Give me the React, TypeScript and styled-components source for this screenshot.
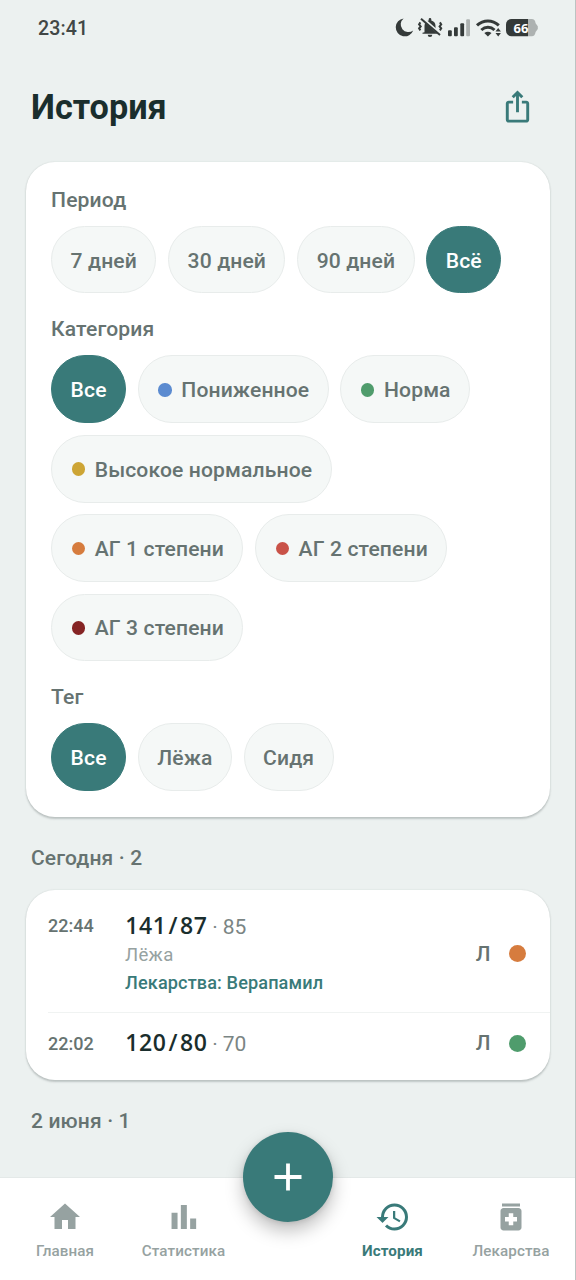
import React from "react";
import styled, { createGlobalStyle } from "styled-components";

const c = {
  bg: "#ecf1f0",
  teal: "#397a79",
  ink: "#1a2e2d",
  mid: "#667371",
  soft: "#96a2a1",
};

const Global = createGlobalStyle`
  * { box-sizing: border-box; }
  body { margin: 0; background: ${c.bg}; font-family: Roboto, sans-serif; }
`;

const Screen = styled.main`
  position: relative;
  display: flex;
  flex-direction: column;
  width: 576px;
  height: 1280px;
  overflow: hidden;
  background: ${c.bg};
  border-right: 1px solid #bcc3c2;
`;

const StatusBar = styled.div`
  display: flex;
  align-items: center;
  justify-content: space-between;
  height: 56px;
  padding: 0 37px 0 38px;
  color: #414746;
`;

const Clock = styled.span`
  font-size: 19.6px;
  font-weight: 500;
  letter-spacing: 0.1px;
  padding-top: 1px;
`;

const Header = styled.header`
  display: flex;
  align-items: center;
  justify-content: space-between;
  height: 105.5px;
  padding: 0 40px 4px 31px;
`;

const Title = styled.h1`
  margin: 0;
  color: ${c.ink};
  font-size: 34.2px;
  font-weight: 700;
  line-height: 42px;
`;

const Card = styled.section`
  margin: 0 25px 0 25.5px;
  background: #fff;
  border-radius: 29px;
  box-shadow: 0 1.5px 2px rgba(60, 75, 73, 0.26), 0 0 2px rgba(60, 75, 73, 0.1);
`;

const Filters = styled(Card)`
  display: flex;
  flex-direction: column;
  gap: 22.9px;
  height: 655.5px;
  padding: 25.2px 25.5px 0;
`;

const FilterLabel = styled.h2`
  margin: 0 0 13px;
  color: ${c.mid};
  font-size: 21.1px;
  font-weight: 500;
  letter-spacing: 0.15px;
  line-height: 26px;
`;

const Chips = styled.div`
  display: flex;
  flex-wrap: wrap;
  gap: 11.6px;
`;

const Chip = styled.button<{ $active?: boolean }>`
  display: flex;
  align-items: center;
  height: 67.8px;
  margin: 0;
  padding: 1px 18.4px 0 18.6px;
  border: 1.4px solid ${(p) => (p.$active ? c.teal : "#e8eceb")};
  border-radius: 34px;
  background: ${(p) => (p.$active ? c.teal : "#f5f8f7")};
  color: ${(p) => (p.$active ? "#fff" : c.mid)};
  font: 500 21.1px Roboto, sans-serif;
  letter-spacing: 0.13px;
  white-space: nowrap;
`;

const Dot = styled.i<{ $color: string; $size?: number }>`
  flex: none;
  width: ${(p) => p.$size ?? 13.5}px;
  height: ${(p) => p.$size ?? 13.5}px;
  border-radius: 50%;
  background: ${(p) => p.$color};
`;

const ChipDot = styled(Dot)`
  margin: 0 9.6px 0 1px;
`;

const DayLabel = styled.h2`
  margin: 0;
  padding: 28px 31px 18px;
  color: ${c.mid};
  font-size: 21px;
  font-weight: 500;
  letter-spacing: 0.15px;
  line-height: 27px;
`;

const Records = styled(Card)`
  height: 189.5px;
  padding-left: 22.5px;
`;

const Record = styled.article<{ $divided?: boolean }>`
  display: flex;
  align-items: center;
  height: ${(p) => (p.$divided ? 122.5 : 67)}px;
  padding-right: 24.5px;
  border-bottom: ${(p) => (p.$divided ? "1px solid #f0f3f2" : "0")};
  padding-top: ${(p) => (p.$divided ? 6 : 0)}px;
  margin-top: ${(p) => (p.$divided ? 0 : -3)}px;
`;

const Time = styled.time<{ $top: number }>`
  align-self: flex-start;
  width: 77px;
  padding-top: ${(p) => p.$top}px;
  color: ${c.mid};
  font-size: 18px;
  font-weight: 500;
  line-height: 24px;
`;

const Details = styled.div`
  flex: 1;
  align-self: flex-start;
`;

const Reading = styled.div<{ $top: number }>`
  display: flex;
  align-items: baseline;
  height: 28px;
  margin-top: ${(p) => p.$top}px;
  line-height: 28px;
`;

const Pressure = styled.strong`
  display: flex;
  color: ${c.ink};
  font: 600 23px/28px "Open Sans", sans-serif;
`;

const Digit = styled.span`
  width: 13.7px;
  text-align: center;
`;

const Pulse = styled.span`
  margin-left: 5px;
  color: #7a8584;
  font-size: 21px;
`;

const Tag = styled.div`
  color: ${c.soft};
  font-size: 18.6px;
  letter-spacing: 0.3px;
  line-height: 27px;
  margin-top: 2.5px;
`;

const Medicine = styled.div`
  color: ${c.teal};
  font-size: 18.1px;
  font-weight: 500;
  letter-spacing: 0.13px;
  line-height: 28px;
`;

const Arm = styled.span`
  margin-right: 18px;
  color: ${c.mid};
  font-size: 20.8px;
  font-weight: 500;
`;

const TabBar = styled.nav`
  display: flex;
  height: 103px;
  margin-top: auto;
  background: #fff;
  border-top: 1px solid #e4e9e8;
`;

const Tab = styled.a<{ $active?: boolean; $width: number }>`
  display: flex;
  flex: none;
  flex-direction: column;
  align-items: center;
  width: ${(p) => p.$width}px;
  padding-top: 21px;
  color: ${(p) => (p.$active ? c.teal : c.soft)};
  font-size: 15.2px;
  font-weight: ${(p) => (p.$active ? 700 : 500)};
  letter-spacing: 0.1px;
  line-height: 20px;
  svg { width: 36px; height: 36px; margin-bottom: 6px; }
`;

const FabSlot = styled.div`
  flex: none;
  width: 102px;
`;

const Fab = styled.button`
  position: absolute;
  left: 243px;
  bottom: 58px;
  display: grid;
  place-items: center;
  width: 90px;
  height: 90px;
  padding: 0;
  border: 0;
  border-radius: 50%;
  background: ${c.teal};
  box-shadow: 0 9px 18px rgba(0, 0, 0, 0.25), 0 1px 5px rgba(0, 0, 0, 0.1);
`;

const Glyph = ({ d, size = 36 }: { d: string; size?: number }) => (
  <svg width={size} height={size} viewBox="0 0 24 24" fill="currentColor" aria-hidden>
    <path d={d} />
  </svg>
);

const ShareButton = styled.button`
  display: flex;
  padding: 0;
  border: 0;
  background: none;
  color: ${c.teal};
`;

const StatusIcons = () => (
  <svg width="143" height="22" viewBox="0 0 143 22" fill="#343a39" aria-hidden>
    <path d="M8.6 1.4A9 9 0 1 0 18.2 13.4A7.2 7.2 0 0 1 8.6 1.4z" />
    <path d="M29.5 15.3V8.7c0-3 2-4.8 4.2-5.3V2.2a1.3 1.3 0 0 1 2.6 0v1.2c2.4.5 4.2 2.4 4.2 5.3v4.9l2 2.1v1.1H27.5v-1zM32.7 17.8h4.6a2.3 2.3 0 0 1-4.6 0z" />
    <path d="M25.4 5.4l-1.3 2 1.6 2-1.6 2 1.3 2M44.9 5.4l1.3 2-1.6 2 1.6 2-1.3 2" fill="none" stroke="#343a39" strokeWidth="2" />
    <path d="M27.5 1.3l18 16" stroke="#ecf1f0" strokeWidth="3" />
    <path d="M26 1.7l19 16.2" stroke="#343a39" strokeWidth="2" />
    <rect x="53" y="13.3" width="3.8" height="6" rx="1" />
    <rect x="59" y="10.3" width="3.8" height="9" rx="1" />
    <rect x="65.3" y="6.3" width="3.8" height="13" rx="1" />
    <rect x="71.2" y="2.3" width="3.8" height="17" rx="1" fill="#adb2b1" />
    <g fill="none" stroke="#343a39" strokeWidth="3">
      <path d="M82 8.4c6.4-6 15.4-6 21.8 0" />
      <path d="M86.3 13c4-3.7 9.4-3.7 13.2 0" />
    </g>
    <path d="M89.3 16q3.6-2.6 7.2 0L92.9 19.4z" />
    <path d="M103.2 11l2.7 3.5h-5.4zM103.2 19.4l2.7-3.5h-5.4z" />
    <path d="M116.5 2H133v17.2h-16.5a5.5 5.5 0 0 1-5.5-5.5V7.5a5.5 5.5 0 0 1 5.5-5.5z" />
    <path d="M133 2h3.8q3.2 0 3.8 4.2l2.2 3v2.8l-2.2 3q-.6 4.2-3.8 4.2H133z" fill="#adb2b1" />
    <text x="118.6" y="15.5" fill="#fff" fontSize="13" fontWeight="700" fontFamily="Open Sans, sans-serif">66</text>
  </svg>
);

const paths = {
  share: "M16 5l-1.42 1.42-1.59-1.59V16h-1.98V4.83L9.42 6.42 8 5l4-4 4 4zm4 5v11c0 1.1-.9 2-2 2H6c-1.11 0-2-.9-2-2V10c0-1.11.89-2 2-2h3v2H6v11h12V10h-3V8h3c1.1 0 2 .89 2 2z",
  home: "M10 20v-6h4v6h5v-8h3L12 3 2 12h3v8z",
  chart: "M3.7 9.2h4V20h-4zM9.9 4h4v16h-4zm6.2 9h4v7h-4z",
  history: "M13 3a9 9 0 0 0-9 9H1l3.89 3.89.07.14L9 12H6c0-3.87 3.13-7 7-7s7 3.13 7 7-3.13 7-7 7c-1.93 0-3.68-.79-4.94-2.06l-1.42 1.42A8.954 8.954 0 0 0 13 21a9 9 0 0 0 0-18zm-1 5v5l4.28 2.54.72-1.21-3.5-2.08V8H12z",
  meds: "M6 3h12v2H6zm11 3H7c-1.1 0-2 .9-2 2v11c0 1.1.9 2 2 2h10c1.1 0 2-.9 2-2V8c0-1.1-.9-2-2-2zm-1 9h-2.5v2.5h-3V15H8v-3h2.5V9.5h3V12H16v3z",
};

interface Option {
  text: string;
  color?: string;
  active?: boolean;
}

const groups: { label: string; options: Option[] }[] = [
  {
    label: "Период",
    options: [{ text: "7 дней" }, { text: "30 дней" }, { text: "90 дней" }, { text: "Всё", active: true }],
  },
  {
    label: "Категория",
    options: [
      { text: "Все", active: true },
      { text: "Пониженное", color: "#5b8bd0" },
      { text: "Норма", color: "#4f9c6c" },
      { text: "Высокое нормальное", color: "#cda535" },
      { text: "АГ 1 степени", color: "#d67c3e" },
      { text: "АГ 2 степени", color: "#c95248" },
      { text: "АГ 3 степени", color: "#852424" },
    ],
  },
  { label: "Тег", options: [{ text: "Все", active: true }, { text: "Лёжа" }, { text: "Сидя" }] },
];

const PressureValue = ({ value }: { value: string }) => (
  <Pressure>
    {value.split("").map((ch, i) => (
      <Digit key={i}>{ch}</Digit>
    ))}
  </Pressure>
);

export default function App() {
  return (
    <>
      <Global />
      <Screen>
        <StatusBar>
          <Clock>23:41</Clock>
          <StatusIcons />
        </StatusBar>
        <Header>
          <Title>История</Title>
          <ShareButton aria-label="Поделиться">
            <Glyph d={paths.share} size={35} />
          </ShareButton>
        </Header>
        <Filters>
          {groups.map((g) => (
            <div key={g.label}>
              <FilterLabel>{g.label}</FilterLabel>
              <Chips>
                {g.options.map((o) => (
                  <Chip key={o.text} $active={o.active}>
                    {o.color && <ChipDot $color={o.color} />}
                    {o.text}
                  </Chip>
                ))}
              </Chips>
            </div>
          ))}
        </Filters>
        <DayLabel>Сегодня · 2</DayLabel>
        <Records>
          <Record $divided>
            <Time $top={18}>22:44</Time>
            <Details>
              <Reading $top={15}>
                <PressureValue value="141/87" />
                <Pulse>· 85</Pulse>
              </Reading>
              <Tag>Лёжа</Tag>
              <Medicine>Лекарства: Верапамил</Medicine>
            </Details>
            <Arm>Л</Arm>
            <Dot $color="#d67c3e" $size={17} />
          </Record>
          <Record>
            <Time $top={22}>22:02</Time>
            <Details>
              <Reading $top={18}>
                <PressureValue value="120/80" />
                <Pulse>· 70</Pulse>
              </Reading>
            </Details>
            <Arm>Л</Arm>
            <Dot $color="#4f9c6c" $size={17} />
          </Record>
        </Records>
        <DayLabel>2 июня · 1</DayLabel>
        <TabBar>
          <Tab $width={130}>
            <Glyph d={paths.home} />
            Главная
          </Tab>
          <Tab $width={107}>
            <Glyph d={paths.chart} />
            Статистика
          </Tab>
          <FabSlot>
            <Fab aria-label="Добавить">
              <svg width="28" height="28" viewBox="0 0 28 28" stroke="#fff" strokeWidth="3.8">
                <path d="M14 .5v27M.5 14h27" />
              </svg>
            </Fab>
          </FabSlot>
          <Tab $width={107} $active>
            <Glyph d={paths.history} />
            История
          </Tab>
          <Tab $width={130}>
            <Glyph d={paths.meds} />
            Лекарства
          </Tab>
        </TabBar>
      </Screen>
    </>
  );
}
